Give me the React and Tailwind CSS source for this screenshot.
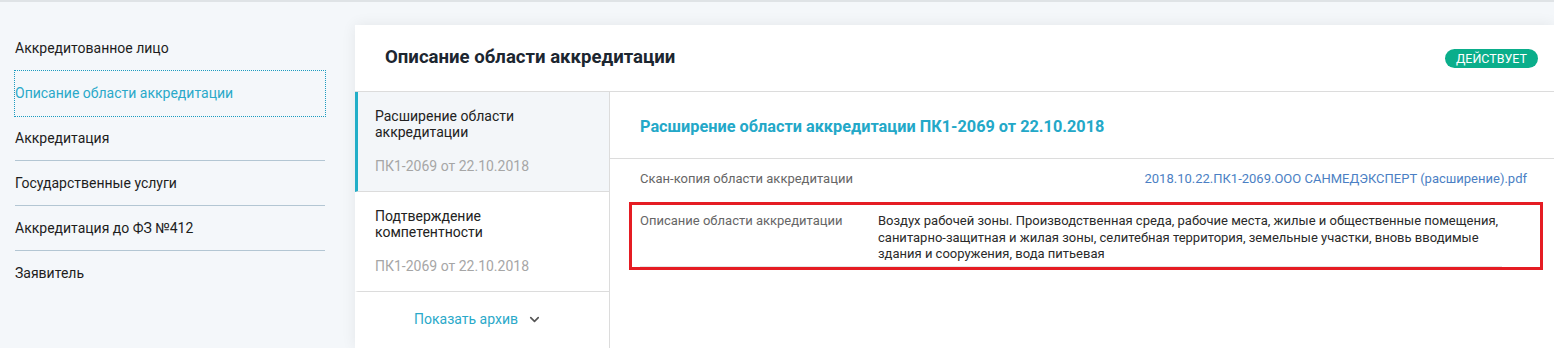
import { ChevronDown } from "lucide-react";

const menu = [
  { label: "Аккредитованное лицо" },
  { label: "Описание области аккредитации", active: true },
  { label: "Аккредитация", border: true },
  { label: "Государственные услуги", border: true },
  { label: "Аккредитация до ФЗ №412", border: true },
  { label: "Заявитель" },
];

const entries = [
  { title: "Расширение области аккредитации", date: "ПК1-2069 от 22.10.2018", active: true },
  { title: "Подтверждение компетентности", date: "ПК1-2069 от 22.10.2018" },
];

function App() {
  return (
    <div
      className="h-[348px] overflow-hidden bg-[#f4f7fa] border-t-2 border-[#dfe3e6] flex"
      style={{ fontFamily: "Roboto, 'Liberation Sans', sans-serif" }}
    >
      {/* левое меню */}
      <div className="w-[355px] shrink-0 pl-[15px] pr-[30px] pt-[24px]">
        {menu.map((m) => (
          <div
            key={m.label}
            className={
              "h-[45px] flex items-center text-[14px] " +
              (m.active
                ? "text-[#2aa9c9] outline-1 outline-dotted outline-[#1b9bbf]"
                : "text-[#1d1d1d]") +
              (m.border ? " border-b border-[#b3c6d3]" : "")
            }
          >
            {m.label}
          </div>
        ))}
      </div>

      {/* карточка */}
      <div className="flex-1 mt-[23px] bg-white shadow-[0_0_14px_rgba(0,0,0,0.07)] flex flex-col">
        <div className="h-[67px] shrink-0 flex items-center justify-between pl-[30px] pr-[16px] border-b border-[#dcdcdc]">
          <h1 className="text-[18.6px] font-bold text-[#1c2630]">Описание области аккредитации</h1>
          <span className="h-[19px] px-[11px] rounded-full bg-[#0aae8b] text-white text-[12.5px] leading-[19px] uppercase">
            Действует
          </span>
        </div>

        <div className="flex flex-1">
          <div className="w-[255px] shrink-0 border-r border-[#dcdcdc] flex flex-col">
            {entries.map((e) => (
              <div
                key={e.title}
                className={
                  "border-b border-[#dcdcdc] border-l-[3px] pl-[17px] pr-[20px] pt-[16px] pb-[17px] " +
                  (e.active ? "bg-[#f3f6f9] border-l-[#22aec8]" : "border-l-transparent")
                }
              >
                <div className="text-[14px] leading-[16px] text-[#222] w-[170px]">{e.title}</div>
                <div className="mt-[18px] text-[14px] leading-[16px] text-[#a6a6a6]">{e.date}</div>
              </div>
            ))}
            <div className="h-[55px] flex items-center justify-center gap-[9px] pr-[8px]">
              <span className="text-[14px] text-[#2aa9c9]">Показать архив</span>
              <ChevronDown size={15} strokeWidth={2.6} className="text-[#555]" />
            </div>
          </div>

          <div className="flex-1 flex flex-col">
            <div className="h-[67px] shrink-0 pt-[25px] pl-[30px] border-b border-[#dcdcdc]">
              <h2 className="text-[16.3px] leading-[20px] font-bold text-[#23a8c8]">
                Расширение области аккредитации ПК1-2069 от 22.10.2018
              </h2>
            </div>
            <div className="pl-[30px] pr-[27px]">
              <div className="h-[43px] flex items-start justify-between pt-[12px] text-[13px] leading-[16px]">
                <span className="text-[#666]">Скан-копия области аккредитации</span>
                <span className="text-[#4b7fc4]">2018.10.22.ПК1-2069.ООО САНМЕДЭКСПЕРТ (расширение).pdf</span>
              </div>
              <div className="-ml-[11px] -mr-[16px] border-[3px] border-[#e51c23] pl-[8px] pr-[38px]">
                <div className="flex pt-[8px] pb-[3px] border-b border-[#e6e6e6] text-[13px] leading-[16.5px]">
                  <span className="w-[238px] shrink-0 text-[#666]">Описание области аккредитации</span>
                  <span className="flex-1 text-[#2a2a2a]">
                    Воздух рабочей зоны. Производственная среда, рабочие места, жилые и общественные помещения,
                    санитарно-защитная и жилая зоны, селитебная территория, земельные участки, вновь вводимые
                    здания и сооружения, вода питьевая
                  </span>
                </div>
              </div>
            </div>
          </div>
        </div>
      </div>
    </div>
  );
}

export default App;
